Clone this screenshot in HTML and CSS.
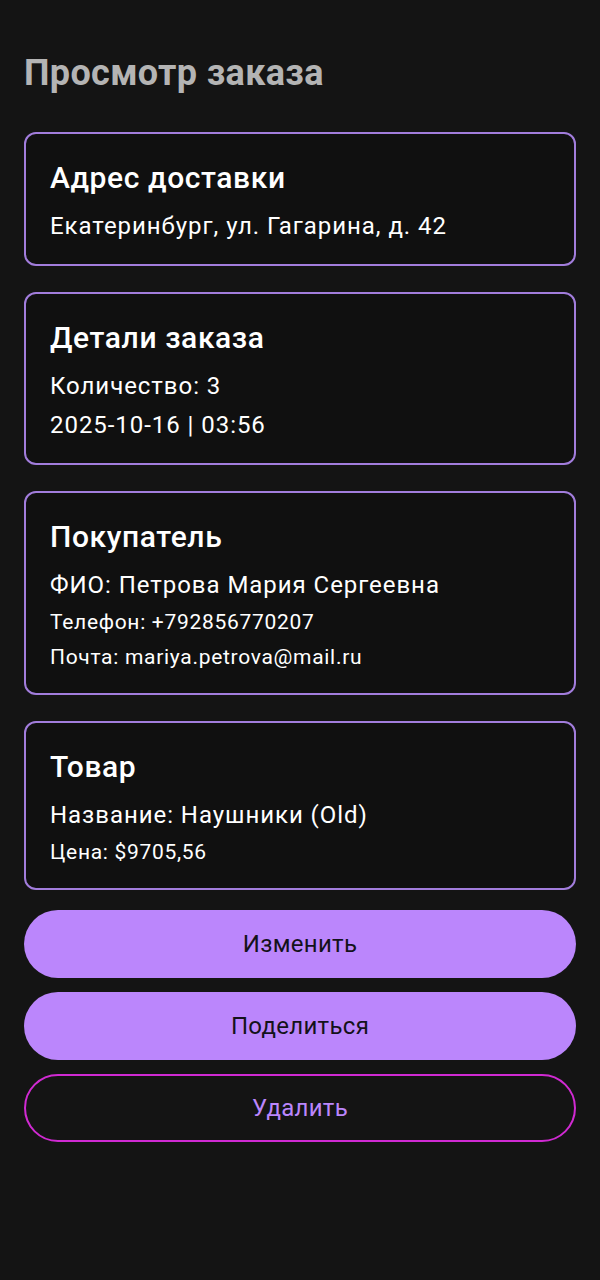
FILE: index.html
```html
<!DOCTYPE html>
<html lang="ru">
<head>
<meta charset="utf-8">
<title>Просмотр заказа</title>
<link rel="stylesheet" href="styles.css">
</head>
<body>
<main class="screen">
  <h1 class="page-title">Просмотр заказа</h1>

  <section class="card">
    <h2 class="card-title">Адрес доставки</h2>
    <p class="line line-lg">Екатеринбург, ул. Гагарина, д. 42</p>
  </section>

  <section class="card">
    <h2 class="card-title">Детали заказа</h2>
    <p class="line line-lg">Количество: 3</p>
    <p class="line line-lg">2025-10-16 | 03:56</p>
  </section>

  <section class="card">
    <h2 class="card-title">Покупатель</h2>
    <p class="line line-lg">ФИО: Петрова Мария Сергеевна</p>
    <p class="line line-sm">Телефон: +792856770207</p>
    <p class="line line-sm">Почта: mariya.petrova@mail.ru</p>
  </section>

  <section class="card">
    <h2 class="card-title">Товар</h2>
    <p class="line line-lg">Название: Наушники (Old)</p>
    <p class="line line-sm">Цена: $9705,56</p>
  </section>

  <div class="actions">
    <button class="btn btn-filled" type="button">Изменить</button>
    <button class="btn btn-filled" type="button">Поделиться</button>
    <button class="btn btn-outline" type="button">Удалить</button>
  </div>
</main>
</body>
</html>
```

FILE: styles.css
```css
* {
  box-sizing: border-box;
}

html, body {
  margin: 0;
  padding: 0;
  background: #141414;
}

body {
  font-family: Roboto, "Noto Sans", "Liberation Sans", sans-serif;
  color: #ffffff;
}

.screen {
  width: 600px;
  min-height: 1280px;
  padding: 52px 24px 24px;
  display: flex;
  flex-direction: column;
}

.page-title {
  margin: 0 0 38px;
  font-size: 36px;
  line-height: 42px;
  font-weight: 700;
  letter-spacing: 0.35px;
  color: #b4b4b4;
}

.card {
  border: 2px solid #a27ddc;
  border-radius: 12px;
  background: #101010;
  padding: 26px 24px 18px;
  margin-bottom: 26px;
}

.card:last-of-type {
  margin-bottom: 20px;
}

.card-title {
  margin: 0 0 11px;
  font-size: 30px;
  line-height: 36px;
  font-weight: 500;
  letter-spacing: 0.6px;
  color: #ffffff;
}

.line {
  margin: 0;
  color: #ffffff;
}

.line-lg {
  font-size: 24px;
  line-height: 39px;
  letter-spacing: 0.95px;
}

.line-sm {
  font-size: 21px;
  line-height: 35px;
  letter-spacing: 0.7px;
}

.actions {
  display: flex;
  flex-direction: column;
  gap: 14px;
}

.btn {
  height: 68px;
  border-radius: 34px;
  font-family: inherit;
  font-size: 24px;
  letter-spacing: 0.3px;
  cursor: pointer;
}

.btn-filled {
  background: #bb86fc;
  border: none;
  color: #14121a;
}

.btn-outline {
  background: transparent;
  border: 2px solid #d02ad2;
  color: #bb86fc;
}
```
